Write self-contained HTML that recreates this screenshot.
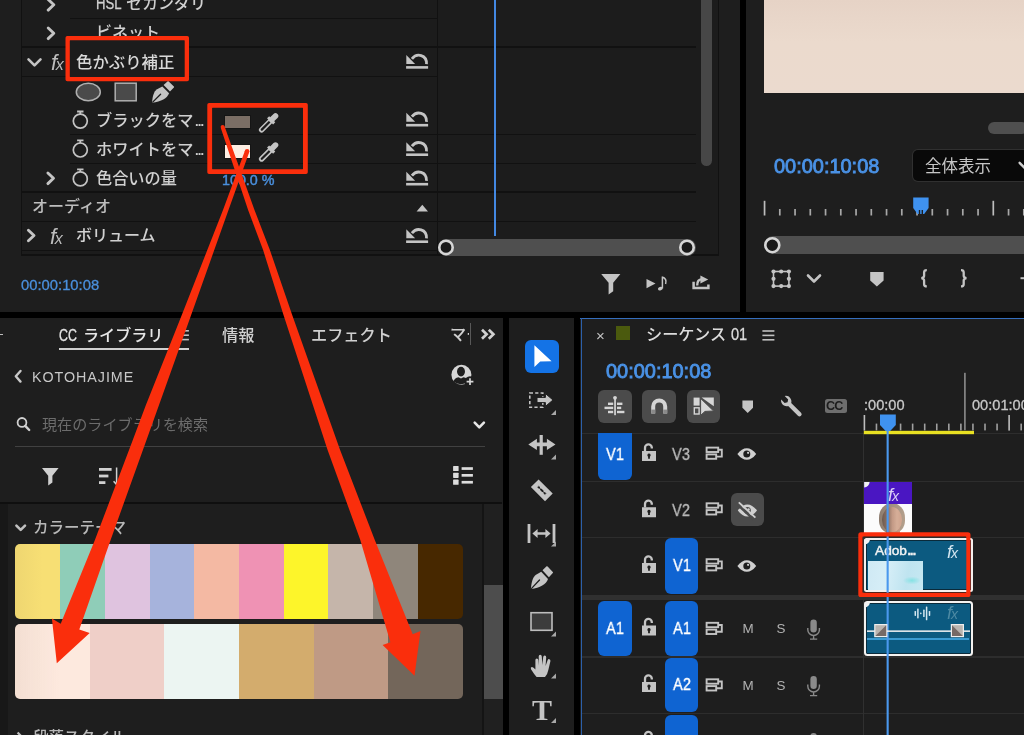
<!DOCTYPE html>
<html lang="ja">
<head>
<meta charset="utf-8">
<title>Premiere Pro - 色かぶり補正</title>
<style>
html,body{margin:0;padding:0;background:#000;}
body{width:1024px;height:735px;overflow:hidden;position:relative;font-family:"Liberation Sans","Noto Sans CJK JP",sans-serif;color:#cfcfcf;}
#app{position:absolute;left:0;top:0;width:1024px;height:735px;overflow:hidden;background:#000;}
.p{position:absolute;background:#1e1e1e;}
.a{position:absolute;}
.t{position:absolute;white-space:nowrap;line-height:20px;font-size:16px;color:#d2d2d2;font-weight:500;will-change:transform;}
.hl{position:absolute;height:1px;background:#111;}
.vl{position:absolute;width:1px;background:#111;}
.blue{color:#4a92e6;}
svg{position:absolute;left:0;top:0;overflow:visible;}
</style>
</head>
<body>
<div id="app">

<!-- ===== PANELS ===== -->
<div class="p" id="pEffect" style="left:0;top:0;width:740px;height:312px;"></div>
<div class="p" id="pProgram" style="left:746px;top:0;width:278px;height:312px;"></div>
<div class="p" id="pLib" style="left:0;top:318px;width:502.8px;height:417px;"></div>
<div class="p" id="pTools" style="left:508.8px;top:318px;width:65.7px;height:417px;"></div>
<div class="p" id="pTimeline" style="left:580px;top:318px;width:444px;height:417px;"></div>

<!-- EFFECT-CONTROLS -->
<div class="a" style="left:22px;top:0px;width:696px;height:255px;background:#1c1c1c;"></div>
<div class="hl" style="left:70px;top:17.7px;width:367px;height:1.4px;background:#111111;"></div>
<div class="hl" style="left:22px;top:46.3px;width:674px;height:1.4px;background:#111111;"></div>
<div class="hl" style="left:22px;top:75.7px;width:415px;height:1.4px;background:#111111;"></div>
<div class="hl" style="left:70px;top:133.5px;width:626px;height:1.4px;background:#111111;"></div>
<div class="hl" style="left:70px;top:162.5px;width:626px;height:1.4px;background:#111111;"></div>
<div class="hl" style="left:22px;top:191.4px;width:674px;height:1.4px;background:#111111;"></div>
<div class="hl" style="left:22px;top:220.6px;width:674px;height:1.4px;background:#111111;"></div>
<div class="hl" style="left:22px;top:249.6px;width:415px;height:1.4px;background:#111111;"></div>
<div class="hl" style="left:22px;top:254.2px;width:697px;height:1.4px;background:#111111;"></div>
<div class="vl" style="left:21px;top:0px;height:256px;width:1px;background:#111111;"></div>
<div class="vl" style="left:437px;top:0px;height:255px;width:1px;background:#111111;"></div>
<div class="vl" style="left:718px;top:0px;height:256px;width:1px;background:#111111;"></div>
<div class="a" style="left:438px;top:239px;width:257.6px;height:16.8px;background:#4f4f4f;border-radius:8.4px;"></div>
<div class="a" style="left:701px;top:-10px;width:11px;height:176px;background:#474747;border-radius:6px;"></div>
<div class="vl" style="left:494.4px;top:0px;height:236px;width:1.9px;background:#4388e2;"></div>
<div class="a" style="left:224.8px;top:115.8px;width:25.4px;height:12.5px;background:#7b6e65;box-shadow:0 0 0 1px #151515;"></div>
<div class="a" style="left:224.8px;top:145px;width:25.4px;height:12.6px;background:#fdeee3;box-shadow:0 0 0 1px #151515;"></div>
<span class="t" style="left:96px;top:-6.1px;font-size:16px;line-height:20px;color:#d0d0d0;"><span style="display:inline-block;transform:scaleX(0.82);transform-origin:0 50%;margin-right:-0.350em;-webkit-text-stroke:0.3px currentColor;">HSL</span> セカンダリ</span>
<span class="t" style="left:96px;top:23.0px;font-size:16px;line-height:20px;color:#d0d0d0;">ビネット</span>
<div class="a" style="left:67.5px;top:38px;width:119.5px;height:41px;background:#1c1c1c;"></div>
<span class="t" style="left:76.3px;top:52.0px;font-size:16.4px;line-height:20px;color:#d8d8d8;">色かぶり補正</span>
<span class="t" style="left:50.5px;top:51.5px;font-size:16px;line-height:22px;color:#bdbdbd;"><i style="font-size:22px">f</i><i style="font-size:16px;margin-left:-1.5px">x</i></span>
<span class="t" style="left:96px;top:109.5px;font-size:16.25px;line-height:20px;color:#d0d0d0;">ブラックをマ<span style="letter-spacing:-0.9px;font-size:13px;font-weight:bold;margin-left:1.5px">...</span></span>
<span class="t" style="left:96px;top:139.0px;font-size:16.25px;line-height:20px;color:#d0d0d0;">ホワイトをマ<span style="letter-spacing:-0.9px;font-size:13px;font-weight:bold;margin-left:1.5px">...</span></span>
<span class="t" style="left:96px;top:167.9px;font-size:16.2px;line-height:20px;color:#d0d0d0;">色合いの量</span>
<span class="t" style="left:221.7px;top:170.0px;font-size:14.3px;line-height:20px;color:#4a8fdc;-webkit-text-stroke:0.45px #4a8fdc;">100.0 %</span>
<span class="t" style="left:32.3px;top:196.5px;font-size:16px;line-height:20px;color:#bdbdbd;">オーディオ</span>
<span class="t" style="left:50.4px;top:225.5px;font-size:16px;line-height:22px;color:#bdbdbd;"><i style="font-size:22px">f</i><i style="font-size:16px;margin-left:-1.5px">x</i></span>
<span class="t" style="left:76.2px;top:226.0px;font-size:16px;line-height:20px;color:#d0d0d0;">ボリューム</span>
<span class="t" style="left:21px;top:274.6px;font-size:14.8px;line-height:20px;color:#4a8fdc;-webkit-text-stroke:0.3px #4a8fdc;">00:00:10:08</span>
<svg width="1024" height="735" viewBox="0 0 1024 735">
<polyline points="48.199999999999996,-0.5 53.8,4.8 48.199999999999996,10.1" fill="none" stroke="#c4c4c4" stroke-width="2.9" stroke-linecap="round" stroke-linejoin="round"/>
<polyline points="48.199999999999996,27.999999999999996 53.8,33.3 48.199999999999996,38.599999999999994" fill="none" stroke="#c4c4c4" stroke-width="2.9" stroke-linecap="round" stroke-linejoin="round"/>
<polyline points="28.5,59.3 34.5,65.3 40.5,59.3" fill="none" stroke="#c4c4c4" stroke-width="2.6" stroke-linecap="round" stroke-linejoin="round"/>
<polyline points="47.9,173.0 53.5,178.3 47.9,183.60000000000002" fill="none" stroke="#c4c4c4" stroke-width="2.9" stroke-linecap="round" stroke-linejoin="round"/>
<polyline points="28.4,230.2 34,235.5 28.4,240.8" fill="none" stroke="#c4c4c4" stroke-width="2.9" stroke-linecap="round" stroke-linejoin="round"/>
<circle cx="80.3" cy="121.1" r="7" fill="none" stroke="#c4c4c4" stroke-width="1.7"/><path d="M77.1,111.5 h6.4 M80.3,111.5 v2.8" stroke="#c4c4c4" stroke-width="1.8" fill="none"/>
<circle cx="80.3" cy="150.0" r="7" fill="none" stroke="#c4c4c4" stroke-width="1.7"/><path d="M77.1,140.4 h6.4 M80.3,140.4 v2.8" stroke="#c4c4c4" stroke-width="1.8" fill="none"/>
<circle cx="80.3" cy="178.9" r="7" fill="none" stroke="#c4c4c4" stroke-width="1.7"/><path d="M77.1,169.3 h6.4 M80.3,169.3 v2.8" stroke="#c4c4c4" stroke-width="1.8" fill="none"/>
<g transform="translate(405.7,54.1)" fill="#c4c4c4"><path d="M20.8,10 C21.2,0.5 11,-1.5 6.2,4.8" fill="none" stroke="#c4c4c4" stroke-width="2.8"/><polygon points="0.6,0.8 0.6,9.8 9.4,9.8"/><rect x="0.4" y="12" width="22" height="2.6"/></g>
<g transform="translate(405.7,111.9)" fill="#c4c4c4"><path d="M20.8,10 C21.2,0.5 11,-1.5 6.2,4.8" fill="none" stroke="#c4c4c4" stroke-width="2.8"/><polygon points="0.6,0.8 0.6,9.8 9.4,9.8"/><rect x="0.4" y="12" width="22" height="2.6"/></g>
<g transform="translate(405.7,141.4)" fill="#c4c4c4"><path d="M20.8,10 C21.2,0.5 11,-1.5 6.2,4.8" fill="none" stroke="#c4c4c4" stroke-width="2.8"/><polygon points="0.6,0.8 0.6,9.8 9.4,9.8"/><rect x="0.4" y="12" width="22" height="2.6"/></g>
<g transform="translate(405.7,170.9)" fill="#c4c4c4"><path d="M20.8,10 C21.2,0.5 11,-1.5 6.2,4.8" fill="none" stroke="#c4c4c4" stroke-width="2.8"/><polygon points="0.6,0.8 0.6,9.8 9.4,9.8"/><rect x="0.4" y="12" width="22" height="2.6"/></g>
<g transform="translate(405.7,228.4)" fill="#c4c4c4"><path d="M20.8,10 C21.2,0.5 11,-1.5 6.2,4.8" fill="none" stroke="#c4c4c4" stroke-width="2.8"/><polygon points="0.6,0.8 0.6,9.8 9.4,9.8"/><rect x="0.4" y="12" width="22" height="2.6"/></g>
<polygon points="416.6,211.4 428,211.4 422.3,204.8" fill="#c4c4c4"/>
<ellipse cx="88.3" cy="92" rx="12" ry="8.8" fill="#4a4a4a" stroke="#b0b0b0" stroke-width="1.5"/>
<rect x="115.2" y="83.2" width="21" height="17.6" fill="#4a4a4a" stroke="#b0b0b0" stroke-width="1.5"/>
<g transform="translate(151.8,81)"><path d="M0.2,21.8 C0.700,15.200 2,10.400 5.300,8.200 L10.500,5.400 L17.300,12.200 C15.400,17.300 9.500,20.500 0.200,21.800 Z" fill="#c4c4c4"/><path d="M0.9,21.1 L8.8,13.2" stroke="#1c1c1c" stroke-width="1.3" stroke-linecap="round"/><path d="M11.8,4.100 L15.900,0.300 Q16.400,-0.100 16.900,0.400 L22.100,5.600 Q22.600,6.100 22.100,6.600 L18.200,10.600 Z" fill="#c4c4c4"/></g>
<g transform="translate(258.2,113)" fill="none" stroke-linecap="round"><path d="M3.4,16.8 L12.4,7.800" stroke="#c4c4c4" stroke-width="5.400"/><path d="M3.600,16.600 L11.400,8.800" stroke="#1c1c1c" stroke-width="2.300"/><path d="M9.900,4.300 L16,10.400" stroke="#c4c4c4" stroke-width="3" stroke-linecap="butt"/><path d="M13.400,6.800 L17.300,2.900" stroke="#c4c4c4" stroke-width="5.600"/></g>
<g transform="translate(258.2,142.2)" fill="none" stroke-linecap="round"><path d="M3.4,16.8 L12.4,7.800" stroke="#c4c4c4" stroke-width="5.400"/><path d="M3.600,16.600 L11.400,8.800" stroke="#1c1c1c" stroke-width="2.300"/><path d="M9.900,4.300 L16,10.400" stroke="#c4c4c4" stroke-width="3" stroke-linecap="butt"/><path d="M13.400,6.800 L17.300,2.900" stroke="#c4c4c4" stroke-width="5.600"/></g>
<circle cx="446" cy="247.4" r="6.7" fill="#1a1a1a" stroke="#d6d6d6" stroke-width="2.6"/>
<circle cx="687" cy="247.4" r="6.7" fill="#1a1a1a" stroke="#d6d6d6" stroke-width="2.6"/>
<path d="M601.2,274 h19.2 l-7.2,8.8 v8.4 l-4.6,3.2 v-11.600 Z" fill="#c4c4c4"/>
<path d="M646.5,279 l9,4.6 l-9,4.6 Z" fill="#c4c4c4"/><path d="M662.4,276.600 v11.8 M662.4,277 q4.800,1.600 3.200,7" fill="none" stroke="#c4c4c4" stroke-width="1.5"/><ellipse cx="660.3" cy="288.600" rx="2.4" ry="1.8" fill="#c4c4c4" transform="rotate(-20 660.3 288.600)"/>
<path d="M693.6,281.800 v6.200 h14.800 v-3.600" fill="none" stroke="#c4c4c4" stroke-width="2.500"/><polygon points="700.4,275.400 708.200,279.400 700.4,283.400" fill="#c4c4c4"/><path d="M697.200,285.400 q0,-6 4.400,-6" fill="none" stroke="#c4c4c4" stroke-width="2.400"/>
</svg>

<!-- PROGRAM -->
<div class="a" style="left:764.2px;top:0px;width:260px;height:93px;background:linear-gradient(180deg,#e6d3c6 0%,#ebdacd 45%,#ebdace 100%);"></div>
<div class="a" style="left:988px;top:122.4px;width:40px;height:11.5px;background:#4f4f4f;border-radius:6px;"></div>
<span class="t" style="left:774.3px;top:154.0px;font-size:19.96px;line-height:24px;color:#4a92e6;-webkit-text-stroke:0.85px #4a92e6;">00:00:10:08</span>
<div class="a" style="left:913.3px;top:150.4px;width:120px;height:30.2px;background:#090909;border-radius:5px;box-shadow:0 0 0 1px #303030;"></div>
<span class="t" style="left:924.5px;top:154.5px;font-size:16.5px;line-height:22px;color:#c6c6c6;font-weight:400;">全体表示</span>
<div class="a" style="left:764px;top:236px;width:262px;height:18px;background:#4f4f4f;border-radius:9px 0 0 9px;"></div>
<svg width="1024" height="735" viewBox="0 0 1024 735">
<rect x="763.70" y="200.8" width="1.7" height="14.7" fill="#bdbdbd"/><rect x="778.95" y="209" width="1.7" height="6.5" fill="#a8a8a8"/><rect x="794.20" y="209" width="1.7" height="6.5" fill="#a8a8a8"/><rect x="809.45" y="209" width="1.7" height="6.5" fill="#a8a8a8"/><rect x="824.70" y="209" width="1.7" height="6.5" fill="#a8a8a8"/><rect x="839.95" y="209" width="1.7" height="6.5" fill="#a8a8a8"/><rect x="855.20" y="209" width="1.7" height="6.5" fill="#a8a8a8"/><rect x="870.45" y="209" width="1.7" height="6.5" fill="#a8a8a8"/><rect x="885.70" y="209" width="1.7" height="6.5" fill="#a8a8a8"/><rect x="900.95" y="209" width="1.7" height="6.5" fill="#a8a8a8"/><rect x="916.20" y="209" width="1.7" height="6.5" fill="#a8a8a8"/><rect x="931.45" y="209" width="1.7" height="6.5" fill="#a8a8a8"/><rect x="946.70" y="209" width="1.7" height="6.5" fill="#a8a8a8"/><rect x="961.95" y="209" width="1.7" height="6.5" fill="#a8a8a8"/><rect x="977.20" y="209" width="1.7" height="6.5" fill="#a8a8a8"/><rect x="992.45" y="200.8" width="1.7" height="14.7" fill="#bdbdbd"/><rect x="1007.70" y="209" width="1.7" height="6.5" fill="#a8a8a8"/><rect x="1022.95" y="209" width="1.7" height="6.5" fill="#a8a8a8"/>
<path d="M913.2,197.5 h15.4 v10.6 l-4.4,5.8 h-1.2 v-4 h-1.4 v4 h-1.4 v-4 h-1.4 v4 h-1.2 l-4.4,-5.8 Z" fill="#3f92f0"/>
<polyline points="1019.6,162.8 1025.1,168.3 1030.6,162.8" fill="none" stroke="#d0d0d0" stroke-width="2.4" stroke-linecap="round" stroke-linejoin="round"/>
<circle cx="772.3" cy="245.2" r="7" fill="#1a1a1a" stroke="#d6d6d6" stroke-width="2.6"/>
<rect x="773.5" y="271.5" width="15.4" height="14.6" fill="none" stroke="#c4c4c4" stroke-width="1.6"/><circle cx="773.5" cy="271.5" r="2.1" fill="#c4c4c4"/><circle cx="773.5" cy="278.8" r="2.1" fill="#c4c4c4"/><circle cx="773.5" cy="286.1" r="2.1" fill="#c4c4c4"/><circle cx="781.2" cy="271.5" r="2.1" fill="#c4c4c4"/><circle cx="781.2" cy="286.1" r="2.1" fill="#c4c4c4"/><circle cx="788.9" cy="271.5" r="2.1" fill="#c4c4c4"/><circle cx="788.9" cy="278.8" r="2.1" fill="#c4c4c4"/><circle cx="788.9" cy="286.1" r="2.1" fill="#c4c4c4"/>
<polyline points="808,275.5 814,281.5 820,275.5" fill="none" stroke="#c4c4c4" stroke-width="2.6" stroke-linecap="round" stroke-linejoin="round"/>
<path d="M870.2,272 h13.4 v8.6 l-6.7,5.8 l-6.7,-5.8 Z" fill="#c4c4c4"/>
<path d="M926.8,270.2 q-2.700,0 -2.700,2.200 v3.400 q0,2 -2.700,2.400 q2.700,0.400 2.700,2.400 v3.600 q0,2.200 2.700,2.200" fill="none" stroke="#c4c4c4" stroke-width="2.300"/>
<path d="M961,270.2 q2.700,0 2.700,2.200 v3.400 q0,2 2.700,2.400 q-2.700,0.400 -2.700,2.400 v3.600 q0,2.200 -2.700,2.200" fill="none" stroke="#c4c4c4" stroke-width="2.300"/>
<path d="M1020.5,278.2 h4" stroke="#c4c4c4" stroke-width="2"/>
</svg>

<!-- LIBRARY -->
<div class="a" style="left:0px;top:333.5px;width:2.5px;height:1.6px;background:#bdbdbd;"></div>
<span class="t" style="left:59.4px;top:324.0px;font-size:16.1px;line-height:22px;color:#e6e6e6;word-spacing:1.6px;"><span style="display:inline-block;transform:scaleX(0.77);transform-origin:0 50%;margin-right:-0.332em;-webkit-text-stroke:0.3px currentColor;">CC</span> ライブラリ</span>
<div class="a" style="left:58.5px;top:348px;width:130.5px;height:2px;background:#d0d0d0;"></div>
<span class="t" style="left:221.8px;top:323.6px;font-size:16.2px;line-height:22px;color:#d0d0d0;">情報</span>
<span class="t" style="left:311px;top:323.6px;font-size:16.2px;line-height:22px;color:#d0d0d0;">エフェクト</span>
<div class="a" style="left:450.4px;top:321px;width:18.8px;height:26px;overflow:hidden;"><span class="t" style="left:0;top:2px;font-size:16.2px;line-height:22px;color:#d0d0d0;">マーカー</span></div>
<div class="vl" style="left:470.2px;top:323px;height:22.30000000000001px;width:1px;background:#585858;"></div>
<span class="t" style="left:32.2px;top:366.6px;font-size:14.3px;line-height:20px;color:#c8c8c8;letter-spacing:0.95px;">KOTOHAJIME</span>
<span class="t" style="left:42.4px;top:415.0px;font-size:15.1px;line-height:20px;color:#6c6c6c;font-weight:400;">現在のライブラリを検索</span>
<div class="hl" style="left:15px;top:445.9px;width:470.4px;height:1.6px;background:#414141;"></div>
<div class="hl" style="left:0px;top:501.5px;width:502px;height:2px;background:#0f0f0f;"></div>
<div class="a" style="left:0px;top:503.5px;width:8px;height:232px;background:#181818;"></div>
<div class="a" style="left:483.5px;top:503.5px;width:19px;height:232px;background:#202020;"></div>
<div class="vl" style="left:482px;top:503.5px;height:231.5px;width:1.5px;background:#141414;"></div>
<div class="a" style="left:484px;top:585.3px;width:18.5px;height:113.6px;background:#4d4d4d;"></div>
<span class="t" style="left:32.6px;top:517.5px;font-size:15.5px;line-height:20px;color:#b8b8b8;">カラーテーマ</span>
<span class="t" style="left:32.6px;top:728.4px;font-size:15.5px;line-height:20px;color:#b8b8b8;">段落スタイル</span>
<div class="a" style="left:15.3px;top:544px;width:447.4px;height:74.5px;border-radius:5px;overflow:hidden;"><div class="a" style="left:0.00px;top:0;width:45.24px;height:74.5px;background:linear-gradient(90deg, rgba(130,100,70,0.075) 0%, rgba(130,100,70,0) 60%), #f7df74;"></div><div class="a" style="left:44.74px;top:0;width:45.24px;height:74.5px;background:#8fcdb8;"></div><div class="a" style="left:89.48px;top:0;width:45.24px;height:74.5px;background:#dfc3df;"></div><div class="a" style="left:134.22px;top:0;width:45.24px;height:74.5px;background:#a6b3dc;"></div><div class="a" style="left:178.96px;top:0;width:45.24px;height:74.5px;background:#f4b9a3;"></div><div class="a" style="left:223.70px;top:0;width:45.24px;height:74.5px;background:#ef92b4;"></div><div class="a" style="left:268.44px;top:0;width:45.24px;height:74.5px;background:#fdf52a;"></div><div class="a" style="left:313.18px;top:0;width:45.24px;height:74.5px;background:#c5b5aa;"></div><div class="a" style="left:357.92px;top:0;width:45.24px;height:74.5px;background:#8f867b;"></div><div class="a" style="left:402.66px;top:0;width:45.24px;height:74.5px;background:#472800;"></div></div>
<div class="a" style="left:15.3px;top:624.3px;width:447.4px;height:74.5px;border-radius:5px;overflow:hidden;"><div class="a" style="left:0.00px;top:0;width:75.07px;height:74.5px;background:linear-gradient(90deg, rgba(130,100,70,0.075) 0%, rgba(130,100,70,0) 60%), #fde9de;"></div><div class="a" style="left:74.57px;top:0;width:75.07px;height:74.5px;background:#efcfc8;"></div><div class="a" style="left:149.13px;top:0;width:75.07px;height:74.5px;background:#ecf5f2;"></div><div class="a" style="left:223.70px;top:0;width:75.07px;height:74.5px;background:#d3ac6d;"></div><div class="a" style="left:298.27px;top:0;width:75.07px;height:74.5px;background:#bf9a85;"></div><div class="a" style="left:372.83px;top:0;width:75.07px;height:74.5px;background:#73665a;"></div></div>
<svg width="1024" height="735" viewBox="0 0 1024 735">
<rect x="179.5" y="330.0" width="9.4" height="1.6" fill="#c0c0c0"/><rect x="179.5" y="334.4" width="9.4" height="1.6" fill="#c0c0c0"/><rect x="179.5" y="338.8" width="9.4" height="1.6" fill="#c0c0c0"/>
<polyline points="482,329.8 486.6,334.3 482,338.8" fill="none" stroke="#d0d0d0" stroke-width="2.7"/><polyline points="488.8,329.8 493.4,334.3 488.8,338.8" fill="none" stroke="#d0d0d0" stroke-width="2.7"/>
<polyline points="20.5,371 15.8,376.3 20.5,381.6" fill="none" stroke="#c8c8c8" stroke-width="2.4" stroke-linejoin="round" stroke-linecap="round"/>
<g fill="#d6d6d6"><circle cx="461.4" cy="374.8" r="10"/></g><g fill="#1e1e1e"><ellipse cx="461" cy="371.6" rx="4" ry="4.8"/><path d="M453.6,381.6 q0.6,-3.6 5,-4.4 l2.4,1.4 l2.4,-1.4 q4.4,0.8 5,4.4 q-3,2.6 -7.4,2.6 q-4.4,0 -7.4,-2.6Z"/><circle cx="470" cy="381.6" r="5.4"/></g><path d="M466.6,381.6 h6.8 M470,378.2 v6.8" stroke="#d6d6d6" stroke-width="1.7"/>
<circle cx="22" cy="422.4" r="4.4" fill="none" stroke="#d0d0d0" stroke-width="1.8"/><path d="M25.2,425.8 l4,4.2" stroke="#d0d0d0" stroke-width="2.4" stroke-linecap="round"/>
<polyline points="474.7,422.7 479.3,427.3 483.90000000000003,422.7" fill="none" stroke="#e6e6e6" stroke-width="2.6" stroke-linecap="round" stroke-linejoin="round"/>
<path d="M42,468 h16.6 l-6.2,7.800 v6.600 l-4.200,3 v-9.600 Z" fill="#d0d0d0"/>
<g fill="#d0d0d0"><rect x="99" y="468" width="12.6" height="2.8"/><rect x="99" y="474.6" width="9.4" height="2.8"/><rect x="99" y="481.2" width="6.4" height="2.8"/></g><path d="M116.6,467.6 v16.4 M113.6,481.2 l3,3.4 l3,-3.4" fill="none" stroke="#d0d0d0" stroke-width="1.5"/>
<rect x="453.1" y="465.9" width="5.5" height="5.2" rx="0.6" fill="#dcdcdc"/><rect x="461.6" y="467.2" width="11.3" height="2.7" fill="#dcdcdc"/><rect x="453.1" y="472.7" width="5.5" height="5.2" rx="0.6" fill="#dcdcdc"/><rect x="461.6" y="474.0" width="11.3" height="2.7" fill="#dcdcdc"/><rect x="453.1" y="479.6" width="5.5" height="5.2" rx="0.6" fill="#dcdcdc"/><rect x="461.6" y="480.90000000000003" width="11.3" height="2.7" fill="#dcdcdc"/>
<polyline points="16.4,525.65 20.7,529.9499999999999 25.0,525.65" fill="none" stroke="#c0c0c0" stroke-width="2.6" stroke-linecap="round" stroke-linejoin="round"/>
<polyline points="17.6,732.5 22,737 17.6,741.5" fill="none" stroke="#c0c0c0" stroke-width="2.2"/>
</svg>

<!-- TOOLS -->
<div class="a" style="left:525px;top:339.6px;width:33.6px;height:33.4px;background:#1473e6;border-radius:6px;"></div>
<span class="t" style="left:531.5px;top:694.8px;font-size:30px;line-height:30px;color:#c4c4c4;font-family:'Liberation Serif',serif;font-weight:bold;">T</span>
<svg width="1024" height="735" viewBox="0 0 1024 735">
<path d="M534.4,345.2 L534.4,367 L540.2,361.6 L551.6,361.2 Z" fill="#fff"/>
<rect x="529.8" y="393" width="13" height="14.2" fill="none" stroke="#c4c4c4" stroke-width="1.6" stroke-dasharray="3.2 2.2"/><path d="M537,397.4 h8.4 v-3.8 l7.6,6.4 l-7.6,6.4 v-3.8 h-8.4 Z" fill="#c4c4c4" stroke="#1e1e1e" stroke-width="1"/><polygon points="556,410 556,415 551,415" fill="#a8a8a8"/>
<rect x="539.6" y="435" width="3.2" height="19.8" fill="#c4c4c4"/><path d="M528.3,444.4 l8.6,-5.6 v3.8 h10 v-3.8 l8.6,5.6 l-8.6,5.6 v-3.8 h-10 v3.8 Z" fill="#c4c4c4"/><polygon points="556,454.5 556,459.5 551,459.5" fill="#a8a8a8"/>
<g transform="translate(541.8,490.3) rotate(45) scale(0.8)"><path d="M-12.5,-6.8 h25 v13.6 h-25 Z M-7.5,-1.2 l1.6,1.2 l-1.6,1.2 h3 l1.4,-1 l1.4,1 h3.4 l1.4,-1 l1.4,1 h3 l-1.6,-1.2 l1.6,-1.2 h-3 l-1.4,1 l-1.4,-1 h-3.4 l-1.4,1 l-1.4,-1 Z" fill="#c4c4c4" fill-rule="evenodd"/></g>
<rect x="527.6" y="524" width="2.8" height="19" fill="#c4c4c4"/><rect x="552.6" y="524" width="2.8" height="19" fill="#c4c4c4"/><path d="M532.4,533.5 l5.2,-4.4 v3.2 h7.8 v-3.2 l5.2,4.4 l-5.2,4.4 v-3.2 h-7.8 v3.2 Z" fill="#c4c4c4"/><polygon points="556,541.5 556,546.5 551,546.5" fill="#a8a8a8"/>
<g transform="translate(530.7,566) scale(1,1.06)"><path d="M0.2,21.8 C0.700,15.200 2,10.400 5.300,8.200 L10.500,5.400 L17.300,12.200 C15.400,17.300 9.500,20.500 0.200,21.800 Z" fill="#c4c4c4"/><path d="M0.9,21.1 L8.8,13.2" stroke="#1e1e1e" stroke-width="1.3" stroke-linecap="round"/><path d="M11.8,4.100 L15.900,0.300 Q16.400,-0.100 16.900,0.400 L22.100,5.600 Q22.600,6.100 22.100,6.600 L18.200,10.600 Z" fill="#c4c4c4"/></g>
<rect x="531" y="612.7" width="21" height="17.6" fill="#3c3c3c" stroke="#bdbdbd" stroke-width="1.6"/><polygon points="556,631.5 556,636.5 551,636.5" fill="#a8a8a8"/>
<path d="M536.6,677 q-2.6,-3 -5.6,-7.8 q-0.8,-1.8 0.8,-2.2 q1.6,-0.2 3.6,2.6 v-9.6 q0,-1.6 1.4,-1.6 q1.4,0 1.5,1.6 l0.6,5.4 l-0.2,-9 q0,-1.7 1.5,-1.7 q1.5,0 1.6,1.7 l0.5,8.6 l0.9,-8 q0.2,-1.6 1.6,-1.5 q1.4,0.1 1.4,1.8 l-0.6,8.6 l2,-5.6 q0.6,-1.5 1.8,-1.1 q1.3,0.4 1,2 l-2,8.6 q-0.8,4.6 -3.4,7.2 Z" fill="#c4c4c4"/><polygon points="556,673.5 556,678.5 551,678.5" fill="#a8a8a8"/>
<polygon points="556,718 556,723 551,723" fill="#a8a8a8"/></svg>

<!-- TIMELINE -->
<div class="a" style="left:580.4px;top:318px;width:444px;height:1.1px;background:#356ebc;"></div>
<div class="a" style="left:580.5px;top:318px;width:1.1px;height:417px;background:#2c60aa;"></div>
<div class="a" style="left:616.2px;top:326px;width:14.2px;height:14px;background:#4b5a0e;"></div>
<span class="t" style="left:596px;top:325.5px;font-size:15px;line-height:20px;color:#c4c4c4;">×</span>
<span class="t" style="left:645.6px;top:323.2px;font-size:16.2px;line-height:22px;color:#dcdcdc;">シーケンス <span style="display:inline-block;transform:scaleX(0.9);transform-origin:0 50%;margin-right:-0.111em;-webkit-text-stroke:0.3px currentColor;">01</span></span>
<span class="t" style="left:605.5px;top:359.0px;font-size:19.96px;line-height:24px;color:#4a92e6;-webkit-text-stroke:0.85px #4a92e6;">00:00:10:08</span>
<div class="a" style="left:598px;top:389.6px;width:33.6px;height:33.1px;background:#4b4b4b;border-radius:6px;"></div>
<div class="a" style="left:642.4px;top:389.6px;width:33.6px;height:33.1px;background:#4b4b4b;border-radius:6px;"></div>
<div class="a" style="left:686.8px;top:389.6px;width:33.6px;height:33.1px;background:#4b4b4b;border-radius:6px;"></div>
<div class="a" style="left:824.7px;top:399.3px;width:22.3px;height:13.7px;background:#6e6e6e;border-radius:2.5px;"></div>
<span class="t" style="left:826.4px;top:399.4px;font-size:12.6px;line-height:14px;color:#1c1c1c;font-weight:bold;letter-spacing:-0.9px;">CC</span>
<span class="t" style="left:864.4px;top:394.6px;font-size:14.6px;line-height:20px;color:#c8c8c8;-webkit-text-stroke:0.3px #c8c8c8;">:00:00</span>
<span class="t" style="left:972px;top:394.6px;font-size:14.6px;line-height:20px;color:#c8c8c8;-webkit-text-stroke:0.3px #c8c8c8;">00:01:00</span>
<div class="hl" style="left:582px;top:432.6px;width:442px;height:1.4px;background:#2d2d2d;"></div>
<div class="hl" style="left:582px;top:481px;width:442px;height:1.4px;background:#2d2d2d;"></div>
<div class="hl" style="left:582px;top:537px;width:442px;height:1.4px;background:#2d2d2d;"></div>
<div class="a" style="left:582px;top:594.6px;width:442px;height:5.6px;background:#303030;"></div>
<div class="hl" style="left:582px;top:656.4px;width:442px;height:1.4px;background:#2d2d2d;"></div>
<div class="hl" style="left:582px;top:713px;width:442px;height:1.4px;background:#2d2d2d;"></div>
<div class="vl" style="left:862.6px;top:433px;height:302px;width:1px;background:#303030;"></div>
<div class="a" style="left:598px;top:433.3px;width:33.7px;height:47.2px;background:#0f64d2;border-radius:0 0 6px 6px;"></div>
<div class="a" style="left:665px;top:538.3px;width:33px;height:55.4px;background:#0f64d2;border-radius:6px;"></div>
<div class="a" style="left:598px;top:601.4px;width:34px;height:54.4px;background:#0f64d2;border-radius:6px;"></div>
<div class="a" style="left:665px;top:601.4px;width:33px;height:54.4px;background:#0f64d2;border-radius:6px;"></div>
<div class="a" style="left:665px;top:657.8px;width:33px;height:54.6px;background:#0f64d2;border-radius:6px;"></div>
<div class="a" style="left:665px;top:714.8px;width:33px;height:30px;background:#0f64d2;border-radius:6px;"></div>
<div class="a" style="left:730.9px;top:493.3px;width:33px;height:32.8px;background:#4b4b4b;border-radius:6px;"></div>
<span class="t" style="left:594.8px;width:40px;text-align:center;top:445.2px;font-size:16.6px;line-height:20px;color:#fff;transform:scaleX(0.87);-webkit-text-stroke:0.35px #fff;">V1</span>
<span class="t" style="left:661.3px;width:40px;text-align:center;top:445.2px;font-size:16.6px;line-height:20px;color:#b8b8b8;transform:scaleX(0.87);-webkit-text-stroke:0.35px #b8b8b8;">V3</span>
<span class="t" style="left:661.3px;width:40px;text-align:center;top:500.7px;font-size:16.6px;line-height:20px;color:#b8b8b8;transform:scaleX(0.87);-webkit-text-stroke:0.35px #b8b8b8;">V2</span>
<span class="t" style="left:661.5px;width:40px;text-align:center;top:556.2px;font-size:16.6px;line-height:20px;color:#fff;transform:scaleX(0.87);-webkit-text-stroke:0.35px #fff;">V1</span>
<span class="t" style="left:594.8px;width:40px;text-align:center;top:618.7px;font-size:16.6px;line-height:20px;color:#fff;transform:scaleX(0.87);-webkit-text-stroke:0.35px #fff;">A1</span>
<span class="t" style="left:661.5px;width:40px;text-align:center;top:618.7px;font-size:16.6px;line-height:20px;color:#fff;transform:scaleX(0.87);-webkit-text-stroke:0.35px #fff;">A1</span>
<span class="t" style="left:661.5px;width:40px;text-align:center;top:675.2px;font-size:16.6px;line-height:20px;color:#fff;transform:scaleX(0.87);-webkit-text-stroke:0.35px #fff;">A2</span>
<span class="t" style="left:737.5px;width:20px;text-align:center;top:619.0px;font-size:13.4px;line-height:20px;color:#b2b2b2;">M</span>
<span class="t" style="left:770.6px;width:20px;text-align:center;top:619.0px;font-size:13.4px;line-height:20px;color:#b2b2b2;">S</span>
<span class="t" style="left:737.5px;width:20px;text-align:center;top:675.5px;font-size:13.4px;line-height:20px;color:#b2b2b2;">M</span>
<span class="t" style="left:770.6px;width:20px;text-align:center;top:675.5px;font-size:13.4px;line-height:20px;color:#b2b2b2;">S</span>
<div class="a" style="left:864.2px;top:482px;width:47.9px;height:22px;background:#4a16c2;"></div>
<div class="a" style="left:864.2px;top:504px;width:47.9px;height:28.6px;background:#fcfcfc;overflow:hidden;"><div class="a" style="left:14.6px;top:-1.5px;width:26.5px;height:30px;border-radius:50% 50% 42% 42%;background:linear-gradient(90deg,#8d7c6e 0%,#a39282 50%,#b4a08c 100%);filter:blur(0.6px);"></div><div class="a" style="left:22px;top:20px;width:14px;height:12px;background:linear-gradient(90deg,#7c6256 0%,#b48c7a 60%,#c49c88 100%);filter:blur(0.5px);"></div><div class="a" style="left:18.2px;top:2.5px;width:20px;height:25px;border-radius:50% 50% 48% 48%;background:linear-gradient(90deg,#6c5a50 0%,#8e7264 28%,#c39a86 52%,#d6ae98 75%,#cfa48e 100%);filter:blur(0.5px);"></div></div>
<div class="a" style="left:863.8px;top:538.2px;width:109.1px;height:54px;background:#0c5a80;box-sizing:border-box;border:2.4px solid #f4f0ee;border-radius:2.5px;box-shadow:inset 0 0 0 1px #0a2a3a;"></div>
<div class="a" style="left:867.9px;top:561px;width:55.4px;height:28.8px;background:radial-gradient(ellipse 9px 4px at 44px 19.5px, #86e2e4 0%, rgba(134,226,228,0) 100%), linear-gradient(100deg,#cfe9f4 0%,#d6eef7 35%,#bfe4f0 70%,#c6e8f2 100%);"></div>
<div class="a" style="left:863.8px;top:601.2px;width:109.1px;height:54.8px;background:#0c5a80;box-sizing:border-box;border:2.8px solid #f4f2f0;border-radius:3.5px;box-shadow:inset 0 0 0 1px #0a2a3a;"></div>
<div class="a" style="left:867.4px;top:637.7px;width:102px;height:2.1px;background:#3a9bd2;"></div>
<span class="t" style="left:874.6px;top:541.0px;font-size:13.7px;line-height:20px;color:#f2f2f2;-webkit-text-stroke:0.45px #f2f2f2;">Adob<span style="letter-spacing:-0.8px;font-size:12px;font-weight:bold;margin-left:0.6px">...</span></span>
<span class="t" style="left:888px;top:483.8px;font-size:16px;line-height:22px;color:#dccff6;"><i style="font-size:18px">f</i><i style="font-size:14px;margin-left:-1px">x</i></span>
<span class="t" style="left:947px;top:540.6px;font-size:16px;line-height:22px;color:#d4e6f0;"><i style="font-size:18px">f</i><i style="font-size:14px;margin-left:-1px">x</i></span>
<span class="t" style="left:946.8px;top:602.0px;font-size:16px;line-height:22px;color:#4d8aa3;"><i style="font-size:18px">f</i><i style="font-size:14px;margin-left:-1px">x</i></span>
<svg width="1024" height="735" viewBox="0 0 1024 735">
<rect x="762.4" y="330.2" width="12" height="1.6" fill="#c0c0c0"/><rect x="762.4" y="334.6" width="12" height="1.6" fill="#c0c0c0"/><rect x="762.4" y="339.0" width="12" height="1.6" fill="#c0c0c0"/>
<g fill="#d6d6d6"><rect x="614.2" y="398.2" width="1.7" height="17"/><circle cx="615" cy="397.8" r="1.9"/><rect x="608" y="402.6" width="5.2" height="2.4"/><rect x="617" y="402.6" width="5.4" height="2.4"/><rect x="604.5" y="406.7" width="8.7" height="2.4"/><rect x="617" y="406.7" width="4.2" height="2.4"/><rect x="608" y="410.8" width="5.2" height="2.4"/><rect x="617" y="410.8" width="7.4" height="2.4"/></g>
<path d="M653.2,413.4 v-7 a6,6 0 0 1 12,0 v7" fill="none" stroke="#d6d6d6" stroke-width="4"/><rect x="651.2" y="409.6" width="4" height="3.8" fill="#8a8a8a"/><rect x="663.2" y="409.6" width="4" height="3.8" fill="#8a8a8a"/>
<rect x="693.6" y="397.6" width="6" height="8" fill="#d6d6d6"/><rect x="694.3" y="407.8" width="4.8" height="6.2" fill="none" stroke="#d6d6d6" stroke-width="1.4"/><polygon points="701.6,397.4 713.8,397.4 713.8,406.2" fill="#d6d6d6"/><path d="M700.6,398.4 L700.6,415.4 L705,411.4 L713.6,411 Z" fill="#d6d6d6" stroke="#4b4b4b" stroke-width="1"/>
<path d="M742.4,400.4 h10.6 v7.4 l-5.3,5.2 l-5.3,-5.2 Z" fill="#c4c4c4"/>
<g transform="translate(791.6,406.4) rotate(-45) scale(0.9)"><path d="M-2.4,12.4 v-15.4 a6.2,6.2 0 0 1 -0.4,-10.6 v5.4 l2.8,1.8 l2.8,-1.8 v-5.4 a6.2,6.2 0 0 1 -0.4,10.6 v15.4 a2.4,2.4 0 0 1 -4.8,0 Z" fill="#c4c4c4"/></g>
<rect x="863.60" y="415" width="1.6" height="15.6" fill="#bdbdbd"/><rect x="875.66" y="423.6" width="1.6" height="6.8" fill="#a0a0a0"/><rect x="887.72" y="423.6" width="1.6" height="6.8" fill="#a0a0a0"/><rect x="899.78" y="423.6" width="1.6" height="6.8" fill="#a0a0a0"/><rect x="911.84" y="423.6" width="1.6" height="6.8" fill="#a0a0a0"/><rect x="923.90" y="423.6" width="1.6" height="6.8" fill="#a0a0a0"/><rect x="935.96" y="423.6" width="1.6" height="6.8" fill="#a0a0a0"/><rect x="948.02" y="423.6" width="1.6" height="6.8" fill="#a0a0a0"/><rect x="960.08" y="423.6" width="1.6" height="6.8" fill="#a0a0a0"/><rect x="972.14" y="423.6" width="1.6" height="6.8" fill="#a0a0a0"/><rect x="984.20" y="423.6" width="1.6" height="6.8" fill="#a0a0a0"/><rect x="996.26" y="423.6" width="1.6" height="6.8" fill="#a0a0a0"/><rect x="1008.32" y="415" width="1.6" height="15.6" fill="#bdbdbd"/><rect x="1020.38" y="423.6" width="1.6" height="6.8" fill="#a0a0a0"/><rect x="964.1" y="372.8" width="1.6" height="57.4" fill="#8c8c8c"/>
<rect x="863.8" y="430.8" width="110.2" height="3.4" fill="#e8e022"/>
<rect x="886.6" y="428" width="2.1" height="307" fill="#4a98ee"/><path d="M880,414.5 h15.8 v10.4 l-5.6,6 h-4.6 l-5.6,-6 Z" fill="#3f92f0"/>
<g transform="translate(642,444)"><path d="M3,7.4 v-3.2 a3.4,3.4 0 0 1 6.8,-0.8 v1.2" fill="none" stroke="#c4c4c4" stroke-width="2.3"/><path d="M0,7 h14 v10 h-14 Z M7,9.6 a1.7,1.7 0 0 0 -0.9,3.1 v2 h1.8 v-2 a1.7,1.7 0 0 0 -0.9,-3.1 Z" fill="#c4c4c4" fill-rule="evenodd"/></g>
<g transform="translate(642,500.2)"><path d="M3,7.4 v-3.2 a3.4,3.4 0 0 1 6.8,-0.8 v1.2" fill="none" stroke="#c4c4c4" stroke-width="2.3"/><path d="M0,7 h14 v10 h-14 Z M7,9.6 a1.7,1.7 0 0 0 -0.9,3.1 v2 h1.8 v-2 a1.7,1.7 0 0 0 -0.9,-3.1 Z" fill="#c4c4c4" fill-rule="evenodd"/></g>
<g transform="translate(642,556)"><path d="M3,7.4 v-3.2 a3.4,3.4 0 0 1 6.8,-0.8 v1.2" fill="none" stroke="#c4c4c4" stroke-width="2.3"/><path d="M0,7 h14 v10 h-14 Z M7,9.6 a1.7,1.7 0 0 0 -0.9,3.1 v2 h1.8 v-2 a1.7,1.7 0 0 0 -0.9,-3.1 Z" fill="#c4c4c4" fill-rule="evenodd"/></g>
<g transform="translate(642,618.5)"><path d="M3,7.4 v-3.2 a3.4,3.4 0 0 1 6.8,-0.8 v1.2" fill="none" stroke="#c4c4c4" stroke-width="2.3"/><path d="M0,7 h14 v10 h-14 Z M7,9.6 a1.7,1.7 0 0 0 -0.9,3.1 v2 h1.8 v-2 a1.7,1.7 0 0 0 -0.9,-3.1 Z" fill="#c4c4c4" fill-rule="evenodd"/></g>
<g transform="translate(642,675)"><path d="M3,7.4 v-3.2 a3.4,3.4 0 0 1 6.8,-0.8 v1.2" fill="none" stroke="#c4c4c4" stroke-width="2.3"/><path d="M0,7 h14 v10 h-14 Z M7,9.6 a1.7,1.7 0 0 0 -0.9,3.1 v2 h1.8 v-2 a1.7,1.7 0 0 0 -0.9,-3.1 Z" fill="#c4c4c4" fill-rule="evenodd"/></g>
<g transform="translate(705.8,446.8)" fill="none" stroke="#c4c4c4" stroke-width="1.9"><rect x="0.8" y="0.8" width="11.6" height="4.4"/><rect x="0.8" y="7.6" width="9.6" height="4.4"/><path d="M12.4,3 h3.6 v6.8 h-5.6"/></g>
<g transform="translate(705.8,502.5)" fill="none" stroke="#c4c4c4" stroke-width="1.9"><rect x="0.8" y="0.8" width="11.6" height="4.4"/><rect x="0.8" y="7.6" width="9.6" height="4.4"/><path d="M12.4,3 h3.6 v6.8 h-5.6"/></g>
<g transform="translate(705.8,558.4)" fill="none" stroke="#c4c4c4" stroke-width="1.9"><rect x="0.8" y="0.8" width="11.6" height="4.4"/><rect x="0.8" y="7.6" width="9.6" height="4.4"/><path d="M12.4,3 h3.6 v6.8 h-5.6"/></g>
<g transform="translate(705.8,622)" fill="none" stroke="#c4c4c4" stroke-width="1.9"><rect x="0.8" y="0.8" width="11.6" height="4.4"/><rect x="0.8" y="7.6" width="9.6" height="4.4"/><path d="M12.4,3 h3.6 v6.8 h-5.6"/></g>
<g transform="translate(705.8,678.5)" fill="none" stroke="#c4c4c4" stroke-width="1.9"><rect x="0.8" y="0.8" width="11.6" height="4.4"/><rect x="0.8" y="7.6" width="9.6" height="4.4"/><path d="M12.4,3 h3.6 v6.8 h-5.6"/></g>
<g transform="translate(746.8,454)"><path d="M-9.4,0 Q-5,-5.8 0,-5.8 Q5,-5.8 9.4,0 Q5,5.8 0,5.8 Q-5,5.8 -9.4,0 Z" fill="#d0d0d0"/><circle cx="0" cy="0" r="3.5" fill="#1e1e1e"/><circle cx="1.3" cy="-1.2" r="1.1" fill="#d0d0d0"/></g>
<g transform="translate(747.4,509.8)"><path d="M-9.6,0.6 Q-5,-5.4 0,-5.4 Q5,-5.4 9.6,0.6 Q5,6.6 0,6.6 Q-5,6.600 -9.600,0.600 Z" fill="#d0d0d0"/><circle cx="0" cy="0.6" r="3.4" fill="#4b4b4b"/><circle cx="1.2" cy="-0.4" r="1.2" fill="#d0d0d0"/><path d="M-9.6,-5 L6.6,9.8" stroke="#4b4b4b" stroke-width="2.6"/><path d="M-8.6,-7.4 L8,7.8" stroke="#d0d0d0" stroke-width="1.9"/></g>
<g transform="translate(746.8,566)"><path d="M-9.4,0 Q-5,-5.8 0,-5.8 Q5,-5.8 9.4,0 Q5,5.8 0,5.8 Q-5,5.8 -9.4,0 Z" fill="#d0d0d0"/><circle cx="0" cy="0" r="3.5" fill="#1e1e1e"/><circle cx="1.3" cy="-1.2" r="1.1" fill="#d0d0d0"/></g>
<g transform="translate(813.6,629.5)"><rect x="-3.2" y="-10" width="6.4" height="13" rx="3.2" fill="#8a8a8a"/><path d="M-5.8,-1.4 v1.6 a5.8,5.8 0 0 0 11.6,0 v-1.6 M0,6 v3.4 M-3.6,9.6 h7.2" fill="none" stroke="#8a8a8a" stroke-width="1.4"/></g>
<g transform="translate(813.6,686)"><rect x="-3.2" y="-10" width="6.4" height="13" rx="3.2" fill="#8a8a8a"/><path d="M-5.8,-1.4 v1.6 a5.8,5.8 0 0 0 11.6,0 v-1.6 M0,6 v3.4 M-3.6,9.6 h7.2" fill="none" stroke="#8a8a8a" stroke-width="1.4"/></g>
<g transform="translate(642,731.5)"><path d="M3,7.4 v-3.2 a3.4,3.4 0 0 1 6.8,-0.8 v1.2" fill="none" stroke="#c4c4c4" stroke-width="2.3"/><path d="M0,7 h14 v10 h-14 Z M7,9.6 a1.7,1.7 0 0 0 -0.9,3.1 v2 h1.8 v-2 a1.7,1.7 0 0 0 -0.9,-3.1 Z" fill="#c4c4c4" fill-rule="evenodd"/></g>
<g transform="translate(813.6,743)"><rect x="-3.2" y="-10" width="6.4" height="13" rx="3.2" fill="#8a8a8a"/><path d="M-5.8,-1.4 v1.6 a5.8,5.8 0 0 0 11.6,0 v-1.6 M0,6 v3.4 M-3.6,9.6 h7.2" fill="none" stroke="#8a8a8a" stroke-width="1.4"/></g>
<path d="M864.2,482 h5.4 a5.4,5.4 0 0 1 -5.4,5.4 Z" fill="#f2f2f2"/><path d="M864.6,539 h5.4 a5.4,5.4 0 0 1 -5.4,5.4 Z" fill="#f2f2f2"/><path d="M864.6,602 h5.4 a5.4,5.4 0 0 1 -5.4,5.4 Z" fill="#f2f2f2"/>
<rect x="914.55" y="610.9" width="1.5" height="5" rx="0.6" fill="#d6e8f0"/><rect x="917.15" y="608.4" width="1.5" height="10" rx="0.6" fill="#d6e8f0"/><rect x="920.05" y="612.6" width="1.5" height="1.6" rx="0.6" fill="#d6e8f0"/><rect x="923.15" y="609.6" width="1.5" height="7.5" rx="0.6" fill="#d6e8f0"/><rect x="925.85" y="606.5" width="1.5" height="13.8" rx="0.6" fill="#d6e8f0"/><rect x="928.75" y="610.9" width="1.5" height="5" rx="0.6" fill="#d6e8f0"/>
<rect x="867" y="630.4" width="103" height="1.5" fill="#f2f2f2"/><rect x="874.8" y="624.6" width="12" height="12" fill="#b9b4b0" stroke="#eeeeee" stroke-width="1.2"/><polygon points="886.1999999999999,625.2 875.4,636 886.1999999999999,636" fill="#766a66"/><rect x="951.4" y="624.6" width="12" height="12" fill="#b9b4b0" stroke="#eeeeee" stroke-width="1.2"/><polygon points="952.0,625.2 952.0,636 962.8,636" fill="#766a66"/>
</svg>

<!-- ANNOTATIONS -->
<svg width="1024" height="735" viewBox="0 0 1024 735">
<path d="M67.3,36 H187.2 A1.8,1.8 0 0 1 189,37.8 V79.4 A1.8,1.8 0 0 1 187.2,81.2 H67.3 A1.8,1.8 0 0 1 65.5,79.4 V37.8 A1.8,1.8 0 0 1 67.3,36 Z M70.2,40.3 H184.29999999999998 A0.4,0.4 0 0 1 184.7,40.699999999999996 V76.5 A0.4,0.4 0 0 1 184.29999999999998,76.9 H70.2 A0.4,0.4 0 0 1 69.8,76.5 V40.699999999999996 A0.4,0.4 0 0 1 70.2,40.3 Z" fill="#fa2e0c" fill-rule="evenodd"/>
<path d="M209.10000000000002,103 H306.0 A1.8,1.8 0 0 1 307.8,104.8 V172.2 A1.8,1.8 0 0 1 306.0,174 H209.10000000000002 A1.8,1.8 0 0 1 207.3,172.2 V104.8 A1.8,1.8 0 0 1 209.10000000000002,103 Z M212.50000000000003,107.8 H302.6 A0.4,0.4 0 0 1 303.0,108.2 V168.79999999999998 A0.4,0.4 0 0 1 302.6,169.2 H212.50000000000003 A0.4,0.4 0 0 1 212.10000000000002,168.79999999999998 V108.2 A0.4,0.4 0 0 1 212.50000000000003,107.8 Z" fill="#fa2e0c" fill-rule="evenodd"/>
<path d="M860.9,532.3 H967.9 A2.6,2.6 0 0 1 970.5,534.9 V594.4 A2.6,2.6 0 0 1 967.9,597 H860.9 A2.6,2.6 0 0 1 858.3,594.4 V534.9 A2.6,2.6 0 0 1 860.9,532.3 Z M863.3,536.5 H965.5 A0.8,0.8 0 0 1 966.3,537.3 V592.0 A0.8,0.8 0 0 1 965.5,592.8 H863.3 A0.8,0.8 0 0 1 862.5,592.0 V537.3 A0.8,0.8 0 0 1 863.3,536.5 Z" fill="#fa2e0c" fill-rule="evenodd"/>
<polygon points="245.0,150.4 223,210 181.4,316 145.9,405 132.8,440 94.9,540 60.7,623.7 51.9,618.4 56.8,663.2 89.7,632.9 79.3,629.5 110.6,540 146.5,440 190.8,316 228.5,210 249.2,152.2" fill="#fa2e0c"/><circle cx="247.1" cy="151.3" r="2.3" fill="#fa2e0c"/>
<polygon points="220.8,127.9 248.1,210 263.1,250 283.5,315 327.6,450 360.3,540 390.4,642.2 382.6,644.9 414.5,675.7 420.5,631.1 412.7,634.2 374.8,540 340.1,450 292.2,315 269.9,250 254.5,210 224.6,126.4" fill="#fa2e0c"/><circle cx="222.7" cy="127.1" r="2.1" fill="#fa2e0c"/>
</svg>


</div>
</body>
</html>
